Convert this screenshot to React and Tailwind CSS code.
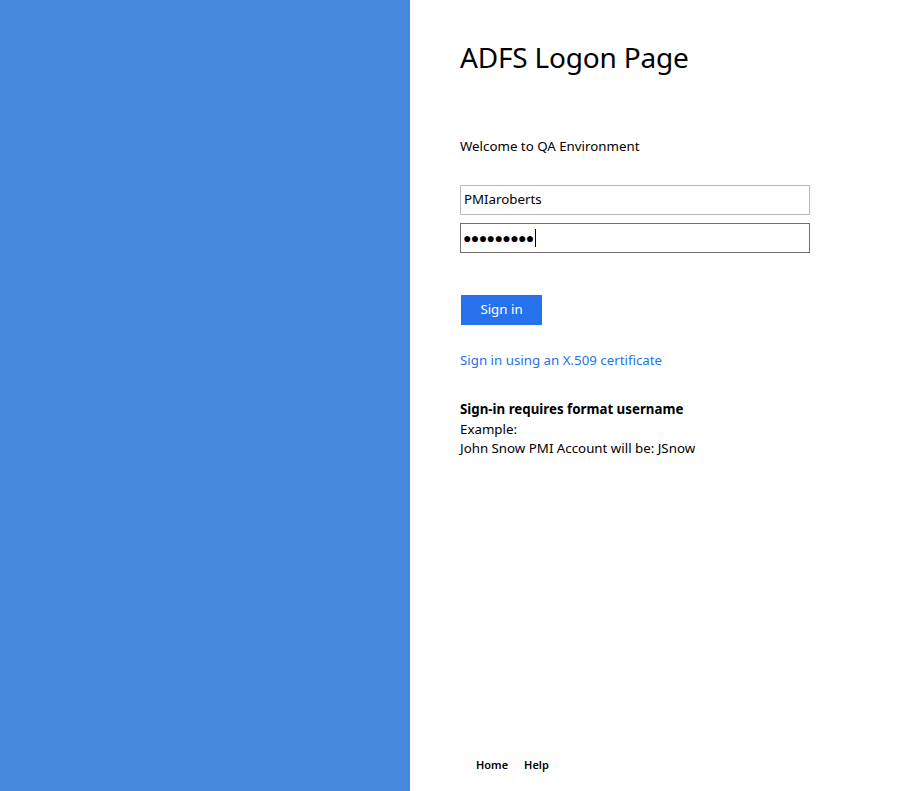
export default function App() {
  return (
    <div className="flex h-[791px] w-full overflow-hidden bg-white text-black" style={{ fontFamily: '"Noto Sans", "Open Sans", sans-serif' }}>
      <div className="h-full w-[410px] shrink-0 bg-[#4689dc]" />
      <div className="flex h-full flex-1 flex-col pl-[50px]">
        <div className="flex-1">
          <h1 className="mt-[37px] text-[28px] leading-[40px] tracking-[-0.2px]">ADFS Logon Page</h1>
          <p className="mt-[59px] text-[13.3px] leading-[20px]">Welcome to QA Environment</p>
          <div className="mt-[29px] flex w-[350px] flex-col gap-[8px]">
            <div className="flex h-[30px] items-center border border-[#bababa] px-[3px] text-[13.3px]">PMIaroberts</div>
            <div className="flex h-[30px] items-center border border-[#707070] px-[2px]">
              <span className="text-[14px] leading-none tracking-[-0.6px]">●●●●●●●●●</span>
              <span className="ml-[1px] h-[18px] w-px bg-black" />
            </div>
          </div>
          <button className="mt-[42px] ml-px h-[30px] w-[81px] bg-[#2672ec] text-[13.3px] text-white">Sign in</button>
          <p className="mt-[25px] text-[13.3px] leading-[20px] text-[#2672ec]">Sign in using an X.509 certificate</p>
          <div className="mt-[30px] text-[13.3px] leading-[19.5px]">
            <p className="font-bold">Sign-in requires format username</p>
            <p>Example:</p>
            <p>John Snow PMI Account will be: JSnow</p>
          </div>
        </div>
        <div className="mb-[18px] ml-[16px] flex gap-[16px] text-[11px] font-semibold">
          <span>Home</span>
          <span>Help</span>
        </div>
      </div>
    </div>
  );
}
